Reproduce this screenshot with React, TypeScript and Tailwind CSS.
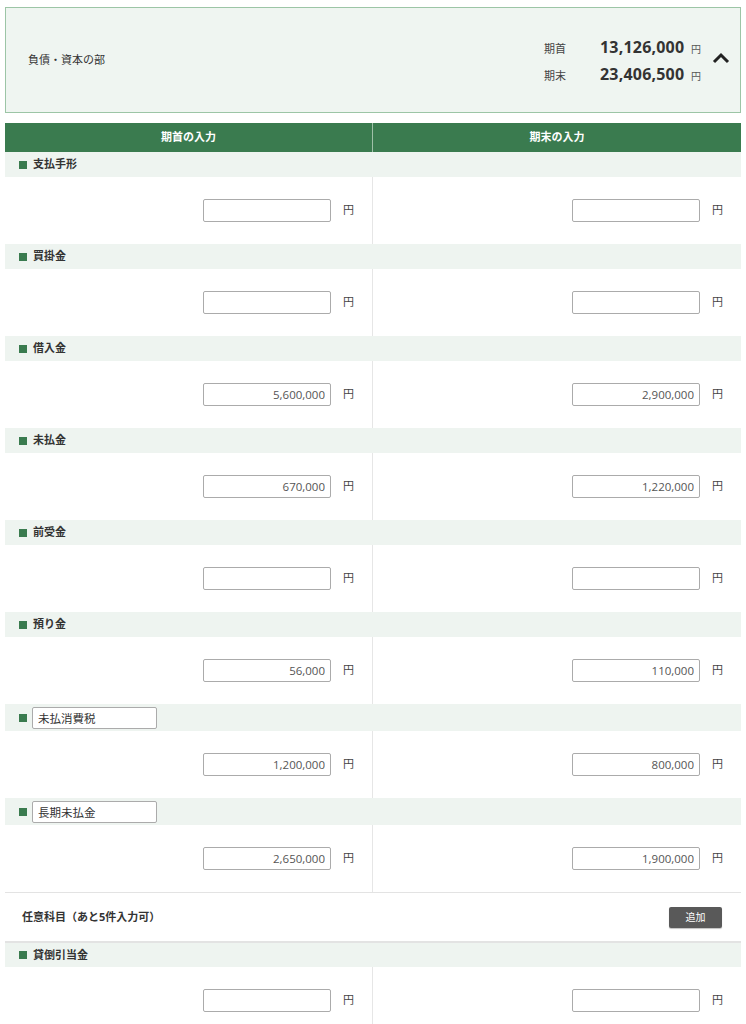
import React from 'react';

type Item = { name: string; start: string; end: string; custom?: boolean };

const items: Item[] = [
  { name: '支払手形', start: '', end: '' },
  { name: '買掛金', start: '', end: '' },
  { name: '借入金', start: '5,600,000', end: '2,900,000' },
  { name: '未払金', start: '670,000', end: '1,220,000' },
  { name: '前受金', start: '', end: '' },
  { name: '預り金', start: '56,000', end: '110,000' },
  { name: '未払消費税', start: '1,200,000', end: '800,000', custom: true },
  { name: '長期未払金', start: '2,650,000', end: '1,900,000', custom: true },
];

const font = { fontFamily: '"Open Sans", "Noto Sans CJK JP", sans-serif' };

function Bullet() {
  return <span className="inline-block h-[8px] w-[8px] shrink-0 bg-[#3a7b4f]" />;
}

function AmountCell({ value, right }: { value: string; right?: boolean }) {
  return (
    <div
      className={
        'flex h-full items-center justify-end ' +
        (right ? 'pr-[18px]' : 'border-r border-[#e6e6e6] pr-[18px]')
      }
    >
      <input
        readOnly
        value={value}
        className="h-[23px] w-[128px] rounded-[2px] border border-[#ababab] bg-white px-[5px] text-right text-[11.5px] text-[#555] outline-none"
      />
      <span className="ml-[12px] text-[11px] text-[#444]">円</span>
    </div>
  );
}

function Section({ item }: { item: Item }) {
  return (
    <div>
      {item.custom ? (
        <div className="flex h-[27px] items-center gap-[5px] bg-[#eef4f0] pl-[14px]">
          <Bullet />
          <input
            readOnly
            value={item.name}
            className="h-[22px] w-[125px] rounded-[2px] border border-[#ababab] bg-white px-[5px] text-[11.5px] text-[#333] outline-none"
          />
        </div>
      ) : (
        <div className="flex h-[25px] items-center gap-[6px] bg-[#eef4f0] pl-[14px]">
          <Bullet />
          <span className="text-[11px] font-bold text-[#333]">{item.name}</span>
        </div>
      )}
      <div className="grid h-[67px] grid-cols-2">
        <AmountCell value={item.start} />
        <AmountCell value={item.end} right />
      </div>
    </div>
  );
}

export default function App() {
  return (
    <div className="min-h-screen bg-white px-[5px] pt-[7px] text-[#333]" style={font}>
      {/* 合計ボックス */}
      <div className="flex h-[106px] items-center border border-[#9cc5a6] bg-[#eff5f1] pl-[22px] pr-[10px]">
        <span className="flex-1 text-[11px] text-[#333]">負債・資本の部</span>
        <div className="flex flex-col gap-[3px]">
          <div className="flex items-baseline">
            <span className="w-[56px] text-[11px] text-[#444]">期首</span>
            <span className="w-[84px] text-right text-[16px] font-bold tracking-[0.2px] text-[#333]">13,126,000</span>
            <span className="ml-[7px] text-[10px] text-[#555]">円</span>
          </div>
          <div className="flex items-baseline">
            <span className="w-[56px] text-[11px] text-[#444]">期末</span>
            <span className="w-[84px] text-right text-[16px] font-bold tracking-[0.2px] text-[#333]">23,406,500</span>
            <span className="ml-[7px] text-[10px] text-[#555]">円</span>
          </div>
        </div>
        <svg width="18" height="12" viewBox="0 0 18 12" className="ml-[11px] mb-[4px]">
          <path d="M2 10 L9 3 L16 10" fill="none" stroke="#222" strokeWidth="3" />
        </svg>
      </div>

      {/* 見出し */}
      <div className="mt-[10px] grid h-[29px] grid-cols-2 bg-[#3a7b4f] text-[11px] font-bold text-white">
        <div className="flex items-center justify-center border-r border-[#9fc0a8]">期首の入力</div>
        <div className="flex items-center justify-center">期末の入力</div>
      </div>

      {items.map((item) => (
        <Section key={item.name} item={item} />
      ))}

      {/* 任意科目 */}
      <div className="flex h-[49px] items-center justify-between border-t border-[#e3e3e3] pl-[17px] pr-[19px]">
        <span className="text-[11px] font-bold text-[#333]">任意科目（あと5件入力可）</span>
        <button className="h-[21px] w-[53px] rounded-[2px] bg-[#595959] text-[10px] text-white shadow-[0_1px_1px_rgba(0,0,0,0.25)]">
          追加
        </button>
      </div>

      <div className="border-t-2 border-[#e3e3e3]">
        <div className="flex h-[24px] items-center gap-[6px] bg-[#eef4f0] pl-[14px]">
          <Bullet />
          <span className="text-[11px] font-bold text-[#333]">貸倒引当金</span>
        </div>
        <div className="grid h-[67px] grid-cols-2">
          <AmountCell value="" />
          <AmountCell value="" right />
        </div>
      </div>
    </div>
  );
}
